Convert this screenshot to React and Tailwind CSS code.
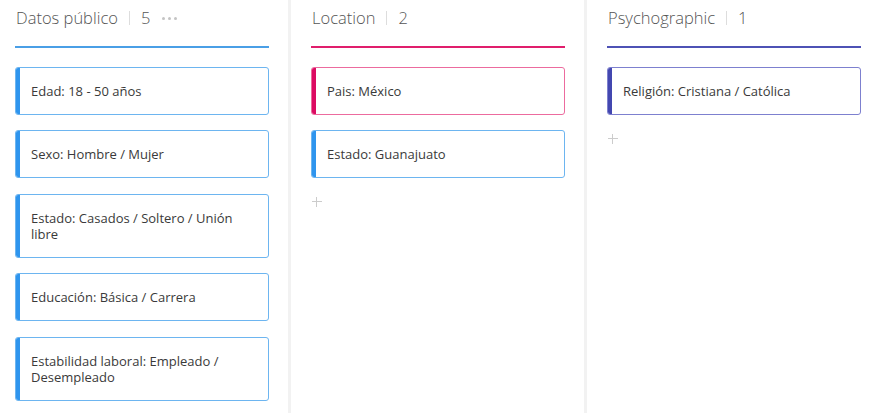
import React from 'react';

const columns = [
  {
    title: 'Datos público',
    count: 5,
    menu: true,
    line: 'bg-[#4a9fe6]',
    border: 'border-[#6db5f0]',
    accent: 'bg-[#2f95ee]',
    cards: [
      'Edad: 18 - 50 años',
      'Sexo: Hombre / Mujer',
      'Estado: Casados / Soltero / Unión libre',
      'Educación: Básica / Carrera',
      'Estabilidad laboral: Empleado / Desempleado',
    ],
    add: false,
  },
  {
    title: 'Location',
    count: 2,
    line: 'bg-[#e01e6c]',
    cards: [
      { text: 'Pais: México', border: 'border-[#ec6b9e]', accent: 'bg-[#dc0b62]' },
      { text: 'Estado: Guanajuato' },
    ],
    border: 'border-[#6db5f0]',
    accent: 'bg-[#2f95ee]',
    add: true,
  },
  {
    title: 'Psychographic',
    count: 1,
    line: 'bg-[#4e52b5]',
    border: 'border-[#7d80cf]',
    accent: 'bg-[#4347b0]',
    cards: ['Religión: Cristiana / Católica'],
    add: true,
  },
];

const Card = ({ text, border, accent }) => (
  <div className={`relative flex rounded-[3px] border ${border} bg-white overflow-hidden`}>
    <div className={`w-[4px] shrink-0 ${accent}`} />
    <div className="py-[15px] pl-[11px] pr-4 text-[13px] leading-4 text-[#3a3a3a]">{text}</div>
  </div>
);

const Column = ({ col }) => (
  <div className="w-[254px] shrink-0">
    <div className="flex items-center h-[36px] text-[16.5px] font-light text-[#555]">
      <span className="ml-[1px]">{col.title}</span>
      <span className="mx-[11px] w-px h-[14px] bg-[#ddd]" />
      <span>{col.count}</span>
      {col.menu && (
        <span className="ml-[12px] flex gap-[3px]">
          <span className="w-[3px] h-[3px] rounded-full bg-[#c4c4c4]" />
          <span className="w-[3px] h-[3px] rounded-full bg-[#c4c4c4]" />
          <span className="w-[3px] h-[3px] rounded-full bg-[#c4c4c4]" />
        </span>
      )}
    </div>
    <div className={`mt-[10px] h-[1.5px] ${col.line}`} />
    <div className="mt-[19px] flex flex-col gap-[15.5px]">
      {col.cards.map((c, i) => {
        const item = typeof c === 'string' ? { text: c } : c;
        return (
          <Card
            key={i}
            text={item.text}
            border={item.border || col.border}
            accent={item.accent || col.accent}
          />
        );
      })}
    </div>
    {col.add && (
      <div className="mt-[19px] ml-[1px] w-[10px] h-[10px] relative">
        <div className="absolute left-[4px] top-0 w-px h-[10px] bg-[#ccc]" />
        <div className="absolute left-0 top-[4px] w-[10px] h-px bg-[#ccc]" />
      </div>
    )}
  </div>
);

export default function App() {
  return (
    <div
      className="w-[875px] h-[415px] bg-white overflow-hidden flex pl-[15px]"
      style={{ fontFamily: '"Open Sans", "Noto Sans", sans-serif' }}
    >
      {columns.map((col, i) => (
        <React.Fragment key={i}>
          {i > 0 && <div className="w-[3px] h-[413px] shrink-0 ml-[19px] mr-[20px] bg-[#f2f2f2]" />}
          <Column col={col} />
        </React.Fragment>
      ))}
    </div>
  );
}
